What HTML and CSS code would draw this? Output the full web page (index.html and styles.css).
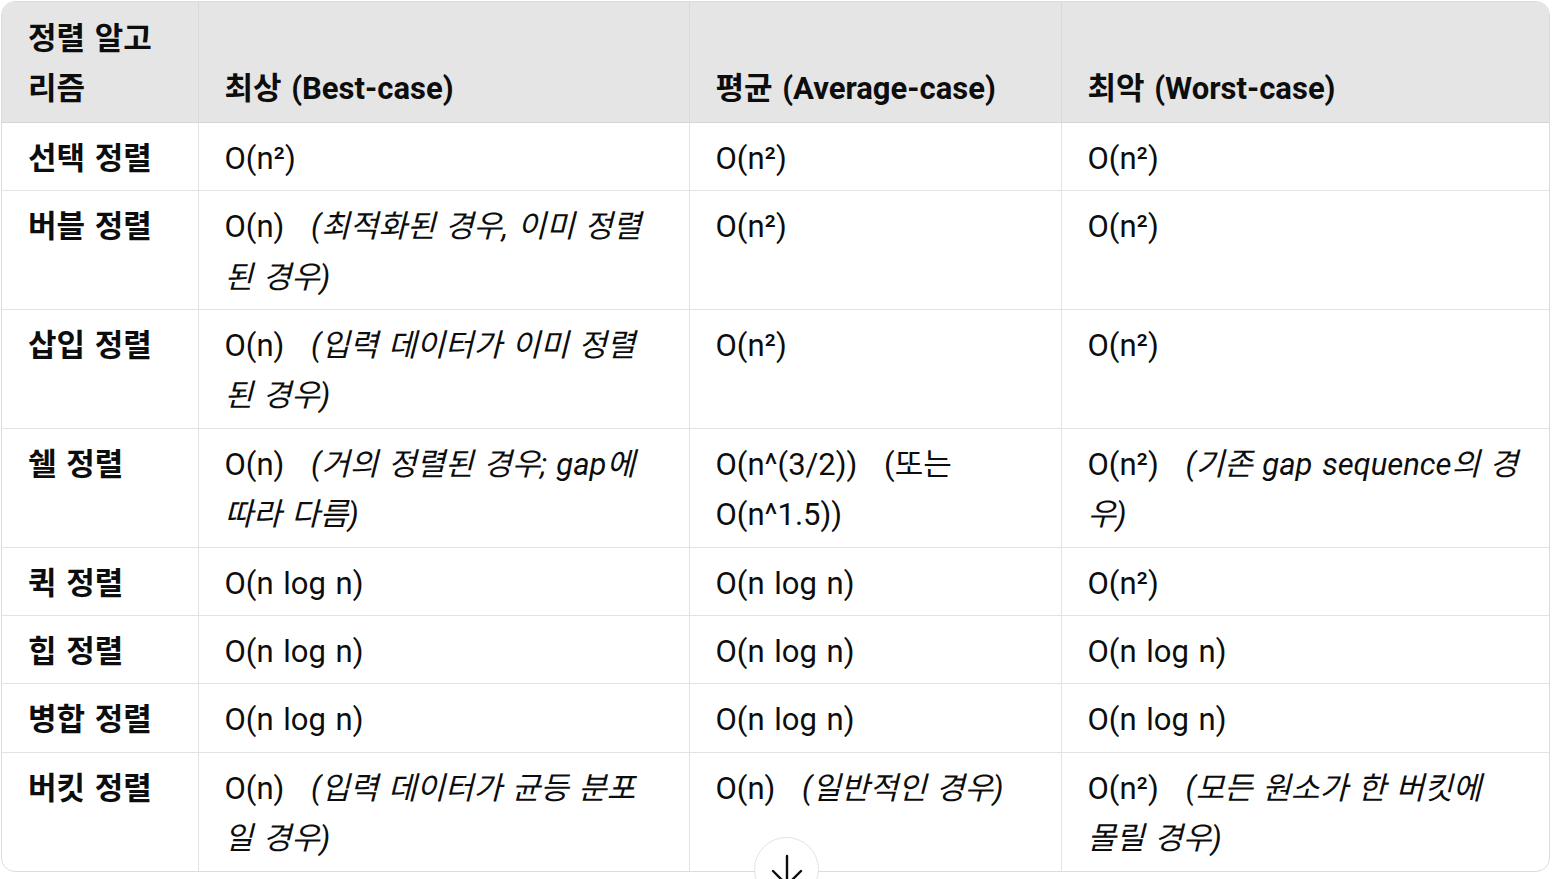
FILE: index.html
```html
<!DOCTYPE html>
<html lang="ko">
<head>
<meta charset="utf-8">
<title>정렬 알고리즘 시간 복잡도</title>
<link rel="stylesheet" href="styles.css">
</head>
<body>
<div class="page">
  <div class="table-wrap">
    <table class="cmp">
      <colgroup>
        <col class="c1"><col class="c2"><col class="c3"><col class="c4">
      </colgroup>
      <thead>
        <tr>
          <th>정렬 알고리즘</th>
          <th>최상 (Best-case)</th>
          <th>평균 (Average-case)</th>
          <th>최악 (Worst-case)</th>
        </tr>
      </thead>
      <tbody>
        <tr>
          <td class="name">선택 정렬</td>
          <td>O(n²)</td>
          <td>O(n²)</td>
          <td>O(n²)</td>
        </tr>
        <tr>
          <td class="name">버블 정렬</td>
          <td>O(n) <em class="note">(최적화된 경우, 이미 정렬된 경우)</em></td>
          <td>O(n²)</td>
          <td>O(n²)</td>
        </tr>
        <tr>
          <td class="name">삽입 정렬</td>
          <td>O(n) <em class="note">(입력 데이터가 이미 정렬된 경우)</em></td>
          <td>O(n²)</td>
          <td>O(n²)</td>
        </tr>
        <tr>
          <td class="name">쉘 정렬</td>
          <td>O(n) <em class="note">(거의 정렬된 경우; gap에 따라 다름)</em></td>
          <td>O(n^(3/2)) <span class="note">(또는</span> O(n^1.5))</td>
          <td>O(n²) <em class="note">(기존 gap sequence의 경우)</em></td>
        </tr>
        <tr>
          <td class="name">퀵 정렬</td>
          <td>O(n log n)</td>
          <td>O(n log n)</td>
          <td>O(n²)</td>
        </tr>
        <tr>
          <td class="name">힙 정렬</td>
          <td>O(n log n)</td>
          <td>O(n log n)</td>
          <td>O(n log n)</td>
        </tr>
        <tr>
          <td class="name">병합 정렬</td>
          <td>O(n log n)</td>
          <td>O(n log n)</td>
          <td>O(n log n)</td>
        </tr>
        <tr>
          <td class="name">버킷 정렬</td>
          <td>O(n) <em class="note">(입력 데이터가 균등 분포일 경우)</em></td>
          <td>O(n) <em class="note">(일반적인 경우)</em></td>
          <td class="keep">O(n²) <em class="note">(모든 원소가 한 버킷에 몰릴 경우)</em></td>
        </tr>
      </tbody>
    </table>
  </div>
  <button class="scroll-btn" type="button" aria-label="아래로 스크롤">
    <svg width="32" height="32" viewBox="0 0 32 32" fill="none" stroke="#0d0d0d" stroke-width="2.4" stroke-linecap="round" stroke-linejoin="round">
      <path d="M16 2 V30"/>
      <path d="M2 17 L16 31 L30 17"/>
    </svg>
  </button>
</div>
</body>
</html>
```

FILE: styles.css
```css
html, body {
  margin: 0;
  padding: 0;
  background: #ffffff;
}

body {
  font-family: Roboto, "Noto Sans CJK KR", sans-serif;
  color: #0d0d0d;
  min-height: 100vh;
}

.page {
  position: relative;
  padding: 1px 2px 0 1px;
  height: 878px;
  overflow: hidden;
}

.table-wrap {
  border: 1px solid #dcdcdc;
  border-radius: 14px;
  overflow: hidden;
}

.cmp {
  width: 100%;
  border-collapse: collapse;
  table-layout: fixed;
  font-size: 31px;
  line-height: 50.4px;
  word-spacing: 2px;
}

.c1 { width: 196px; }
.c2 { width: 491px; }
.c3 { width: 372px; }
.c4 { width: auto; }

.cmp th,
.cmp td {
  text-align: left;
  padding: 11px 26px 6px;
  border-right: 1px solid #e3e3e3;
  border-bottom: 1px solid #e3e3e3;
  vertical-align: top;
}

.cmp th:last-child,
.cmp td:last-child {
  border-right: none;
}

.cmp tbody tr:last-child td {
  border-bottom: none;
}

.cmp thead th {
  background: #e5e5e5;
  font-weight: 700;
  vertical-align: bottom;
  padding-top: 12px;
  padding-bottom: 7px;
  border-bottom-color: #d6d6d6;
  border-right-color: #d9d9d9;
}

.cmp td.name {
  font-weight: 700;
}

.cmp td.keep {
  word-break: keep-all;
}

.note {
  margin-left: 17px;
}

em.note {
  font-style: italic;
}

.scroll-btn {
  position: absolute;
  left: 754px;
  top: 837px;
  width: 65px;
  height: 65px;
  border-radius: 50%;
  border: 1px solid #e3e3e3;
  background: #ffffff;
  padding: 0;
  display: flex;
  align-items: flex-start;
  justify-content: center;
  padding-top: 16px;
  box-sizing: border-box;
}
```
